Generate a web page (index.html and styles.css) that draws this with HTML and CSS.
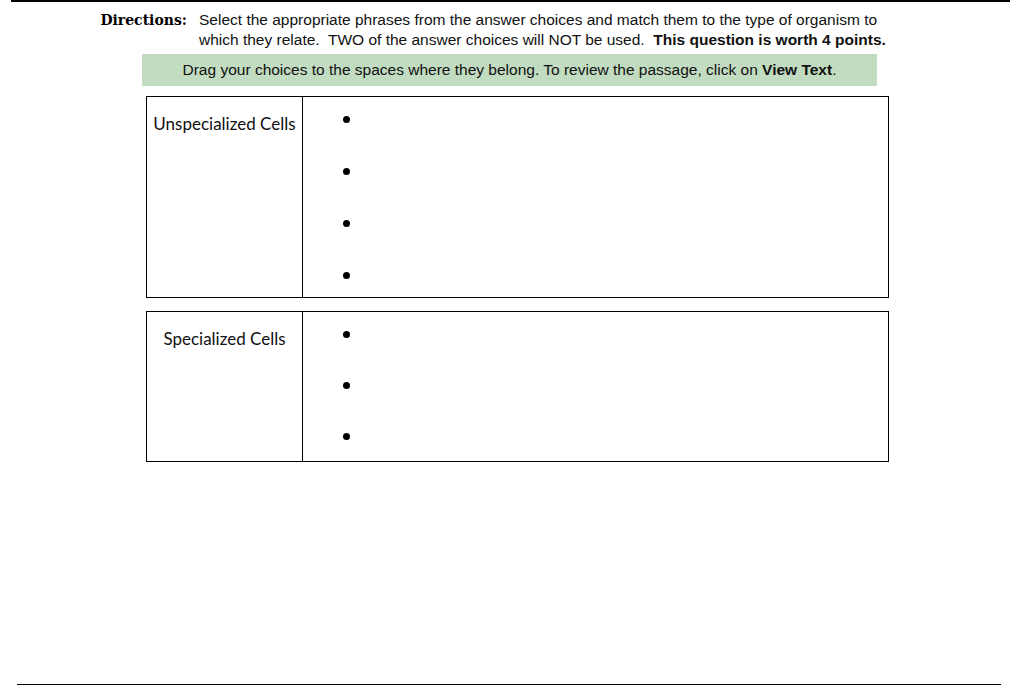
FILE: index.html
```html
<!DOCTYPE html>
<html>
<head>
<meta charset="utf-8">
<link rel="stylesheet" href="styles.css">
</head>
<body>
<div class="page">
  <div class="top-rule"></div>
  <div class="directions">
    <div class="dir-label">Directions:</div>
    <div class="dir-text">Select the appropriate phrases from the answer choices and match them to the type of organism to which they relate.&nbsp; TWO of the answer choices will NOT be used.&nbsp; <b>This question is worth 4 points.</b></div>
  </div>
  <div class="hint">Drag your choices to the spaces where they belong. To review the passage, click on <b>View Text</b>.</div>
  <div class="match match-a">
    <div class="label">Unspecialized Cells</div>
    <ul class="slots">
      <li></li><li></li><li></li><li></li>
    </ul>
  </div>
  <div class="match match-b">
    <div class="label">Specialized Cells</div>
    <ul class="slots">
      <li></li><li></li><li></li>
    </ul>
  </div>
  <div class="bottom-rule"></div>
</div>
</body>
</html>
```

FILE: styles.css
```css
html, body {
  margin: 0;
  padding: 0;
  background: #fff;
}
.page {
  height: 686px;
  display: flex;
  flex-direction: column;
  font-family: "Liberation Sans", Arial, sans-serif;
  color: #000;
}
.top-rule {
  margin: 0 8px 0 11px;
  border-top: 2px solid #000;
}
.directions {
  display: flex;
  margin-top: 8px;
  font-size: 15.5px;
  line-height: 20px;
}
.dir-label {
  width: 187px;
  flex: none;
  text-align: right;
  font-family: "DejaVu Serif", "Liberation Serif", serif;
  font-weight: bold;
  font-size: 14px;
}
.dir-text {
  margin-left: 12px;
  width: 700px;
  color: #111;
}
.hint {
  margin: 4px 0 0 142px;
  width: 735px;
  height: 32px;
  background: #c1dcc1;
  font-size: 15.5px;
  line-height: 32px;
  text-align: center;
  color: #111;
}
.match {
  display: flex;
  margin-left: 146px;
  width: 743px;
  box-sizing: border-box;
  border: 1px solid #000;
}
.match-a {
  margin-top: 10px;
  height: 202px;
}
.match-b {
  margin-top: 13px;
  height: 151px;
}
.label {
  width: 156px;
  flex: none;
  border-right: 1px solid #000;
  text-align: center;
  font-family: "Lato", "Open Sans", sans-serif;
  font-size: 17px;
  padding-top: 16px;
  box-sizing: border-box;
  color: #111;
}
.slots {
  list-style: none;
  margin: 0;
  padding: 19px 0 0 40px;
  display: flex;
  flex-direction: column;
}
.slots li {
  flex: none;
  height: 52px;
}
.match-b .slots li { height: 51px; }
.slots li::before {
  content: "";
  display: block;
  width: 7px;
  height: 7px;
  border-radius: 50%;
  background: #000;
}
.bottom-rule {
  margin: auto 17px 1px 17px;
  border-top: 1px solid #000;
  width: 984px;
}
```
